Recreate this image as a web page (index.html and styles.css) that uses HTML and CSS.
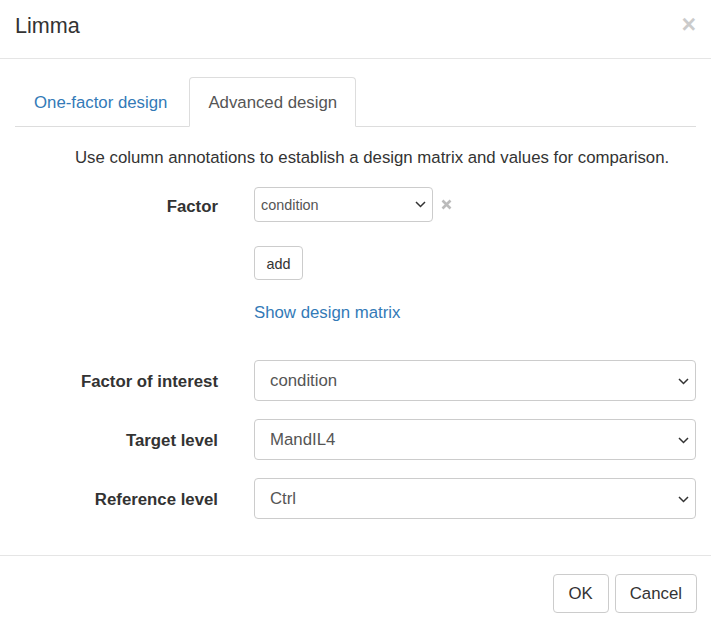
FILE: index.html
```html
<!DOCTYPE html>
<html lang="en">
<head>
<meta charset="utf-8">
<title>Limma</title>
<link rel="stylesheet" href="styles.css">
</head>
<body>
<div class="modal">
  <div class="modal-header">
    <h4 class="modal-title">Limma</h4>
    <button class="close" type="button">&times;</button>
  </div>
  <div class="modal-body">
    <ul class="tabs">
      <li class="tab"><a href="#">One-factor design</a></li>
      <li class="tab active"><a href="#">Advanced design</a></li>
    </ul>
    <p class="desc">Use column annotations to establish a design matrix and values for comparison.</p>
    <div class="form">
      <label class="label label-factor">Factor</label>
      <div class="factor-ctrl">
        <div class="select select-sm">
          <span>condition</span>
          <svg class="chev" width="11" height="7" viewBox="0 0 11 7"><path d="M1 1l4.5 4.5L10 1" fill="none" stroke="#333" stroke-width="1.5"/></svg>
        </div>
        <svg class="remove" width="11" height="11" viewBox="0 0 11 11"><path d="M1.5 1.5l8 8M9.5 1.5l-8 8" stroke="#bbb" stroke-width="2.6"/></svg>
      </div>
      <div></div>
      <div class="extra">
        <button class="btn btn-add" type="button">add</button>
        <a class="link" href="#">Show design matrix</a>
      </div>
    </div>
    <div class="form form-main">
      <label class="label">Factor of interest</label>
      <div class="select"><span>condition</span><svg class="chev" width="11" height="7" viewBox="0 0 11 7"><path d="M1 1l4.5 4.5L10 1" fill="none" stroke="#333" stroke-width="1.5"/></svg></div>
      <label class="label">Target level</label>
      <div class="select"><span>MandIL4</span><svg class="chev" width="11" height="7" viewBox="0 0 11 7"><path d="M1 1l4.5 4.5L10 1" fill="none" stroke="#333" stroke-width="1.5"/></svg></div>
      <label class="label">Reference level</label>
      <div class="select"><span>Ctrl</span><svg class="chev" width="11" height="7" viewBox="0 0 11 7"><path d="M1 1l4.5 4.5L10 1" fill="none" stroke="#333" stroke-width="1.5"/></svg></div>
    </div>
  </div>
  <div class="modal-footer">
    <button class="btn btn-ok" type="button">OK</button>
    <button class="btn" type="button">Cancel</button>
  </div>
</div>
</body>
</html>
```
FILE: styles.css
```css
* { box-sizing: border-box; }
html, body { margin: 0; padding: 0; background: #fff; }
body {
  font-family: "Liberation Sans", Arial, Helvetica, sans-serif;
  font-size: 16.8px;
  color: #333;
  width: 711px;
  height: 618px;
  overflow: hidden;
}
.modal { width: 711px; }
.modal-header {
  height: 59px;
  padding: 0 15px;
  display: flex;
  align-items: center;
  justify-content: space-between;
  border-bottom: 1px solid #e5e5e5;
}
.modal-title {
  margin: 0;
  font-size: 21.6px;
  font-weight: normal;
  color: #333;
  line-height: 1;
  padding-bottom: 7px;
}
.close {
  background: none;
  border: 0;
  padding: 0;
  margin: 0 0 10px 0;
  font-family: "Liberation Sans", Arial, sans-serif;
  font-size: 25px;
  font-weight: bold;
  line-height: 1;
  color: #000;
  opacity: 0.2;
}
.modal-body { padding: 18px 15px 36px; }
.tabs {
  list-style: none;
  margin: 0;
  padding: 0;
  display: flex;
  border-bottom: 1px solid #ddd;
}
.tab {
  margin-right: 3px;
  margin-bottom: -1px;
  border: 1px solid transparent;
  border-radius: 4px 4px 0 0;
}
.tab a {
  display: block;
  height: 48px;
  line-height: 50px;
  padding: 0 18px;
  color: #337ab7;
  text-decoration: none;
}
.tab.active {
  border-color: #ddd #ddd transparent;
  background: #fff;
}
.tab.active a { color: #555; }
.desc {
  margin: 20px 0 0;
  padding-left: 60px;
  line-height: 22px;
}
.desc + .form { margin-top: 18px; }
.form {
  display: grid;
  grid-template-columns: 203px 1fr;
  column-gap: 36px;
  align-items: center;
}
.label {
  text-align: right;
  font-weight: bold;
  line-height: 22px;
  padding-top: 2px;
}
.label-factor { padding-top: 5px; }
.factor-ctrl {
  display: flex;
  align-items: center;
  gap: 8px;
}
.select {
  height: 41px;
  border: 1px solid #ccc;
  border-radius: 4px;
  display: flex;
  align-items: center;
  justify-content: space-between;
  padding: 1px 6px 0 15px;
  color: #555;
  background: #fff;
}
.select-sm {
  width: 179px;
  height: 35px;
  font-size: 14.4px;
  padding: 0 6px 0 6px;
}
.extra {
  grid-column: 2;
  display: flex;
  flex-direction: column;
  align-items: flex-start;
  padding-top: 24px;
}
.btn {
  font-family: "Liberation Sans", Arial, sans-serif;
  font-size: 16.8px;
  color: #333;
  background: #fff;
  border: 1px solid #ccc;
  border-radius: 4px;
  height: 39px;
  padding: 1px 14px 0;
}
.btn-ok { padding: 1px 15px 0; }
.btn-add {
  font-size: 14.4px;
  height: 34px;
  width: 49px;
  padding: 1px 0 0;
}
.link {
  margin-top: 22px;
  color: #337ab7;
  text-decoration: none;
  line-height: 22px;
}
.form-main {
  margin-top: 36px;
  row-gap: 18px;
}
.modal-footer {
  border-top: 1px solid #e5e5e5;
  padding: 18px 14px 18px 15px;
  display: flex;
  justify-content: flex-end;
  gap: 6px;
}
```
